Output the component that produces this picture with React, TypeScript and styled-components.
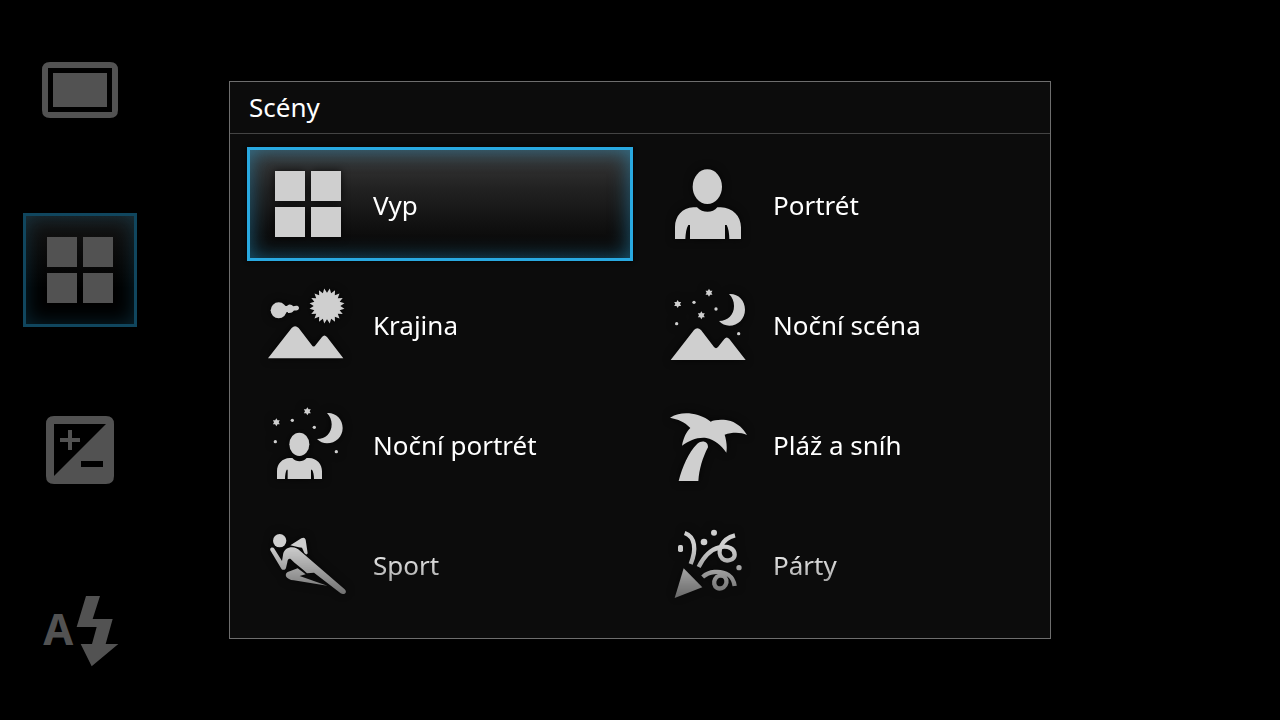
import React, { useState } from "react";
import styled, { createGlobalStyle, css } from "styled-components";

const GlobalStyle = createGlobalStyle`
  *, *::before, *::after { box-sizing: border-box; }
  body {
    margin: 0;
    background: #000;
    color: #fff;
    font-family: "Noto Sans", "Open Sans", sans-serif;
  }
  button { font: inherit; color: inherit; cursor: pointer; }
`;

const Screen = styled.div`
  display: flex;
  min-height: 100vh;
`;

const Toolbar = styled.nav`
  display: grid;
  grid-auto-rows: 1fr;
  place-items: center;
  width: 160px;
  flex: none;
`;

const selectedTool = css`
  border-color: #10465e;
  background: linear-gradient(#151515, #000 70%);
  box-shadow: inset 0 0 20px rgba(41, 170, 225, 0.22);
`;

const ToolButton = styled.button<{ $selected?: boolean }>`
  display: grid;
  place-items: center;
  width: 114px;
  height: 114px;
  padding: 0;
  border: 3px solid transparent;
  background: none;
  color: #525252;
  ${(p) => p.$selected && selectedTool}
`;

const Stage = styled.main`
  display: flex;
  flex: 1;
  align-items: center;
  padding: 0 229px 0 69px;
`;

const Dialog = styled.section`
  flex: 1;
  border: 1px solid #6e6e6e;
  background: #0c0c0c;
`;

const Title = styled.h1`
  margin: 0;
  padding: 5px 19px 6px;
  border-bottom: 1px solid #444;
  font-size: 26px;
  font-weight: 400;
  line-height: 40px;
`;

const SceneGrid = styled.div`
  display: grid;
  grid-template-columns: 1fr 1fr;
  gap: 6px 14px;
  padding: 13px 17px 17px;
  mask-image: linear-gradient(#000 calc(100% - 92px), rgba(0, 0, 0, 0.08));
`;

const selectedScene = css`
  border-color: #29a9e1;
  background: linear-gradient(#3a3a3a, #222 35%, #0e0e0e 75%, #080808);
  box-shadow: inset 0 0 20px rgba(41, 170, 225, 0.5), 0 0 4px #000;
`;

const SceneButton = styled.button<{ $selected: boolean }>`
  display: flex;
  align-items: center;
  gap: 25px;
  height: 114px;
  padding: 0 18px;
  border: 3px solid transparent;
  background: none;
  text-align: left;
  ${(p) => p.$selected && selectedScene}
`;

const SceneLabel = styled.span`
  padding-top: 2px;
  font-size: 26px;
  line-height: 40px;
  white-space: nowrap;
`;

const Icon = styled.svg`
  display: block;
  flex: none;
  width: 80px;
  height: 80px;
  fill: currentColor;
`;

const SceneIcon = styled(Icon)`
  color: #cfcfcf;
  filter: drop-shadow(0 0 4px rgba(0, 0, 0, 0.7));
`;

const AutoLetter = styled.text`
  font-family: "Noto Sans", sans-serif;
  font-size: 130px;
  font-weight: 700;
`;

const sunPoints = Array.from({ length: 40 }, (_, i) => {
  const angle = ((i * 9) * Math.PI) / 180 - Math.PI / 2;
  const r = i % 2 ? 53 : 40;
  return `${(216 + r * Math.cos(angle)).toFixed(1)},${(93 + r * Math.sin(angle)).toFixed(1)}`;
}).join(" ");

function Star({ x, y }: { x: number; y: number }) {
  const points = Array.from({ length: 12 }, (_, i) => {
    const angle = (i * 30 * Math.PI) / 180 - Math.PI / 2;
    const r = i % 2 ? 7 : 12;
    return `${(x + r * Math.cos(angle)).toFixed(1)},${(y + r * Math.sin(angle)).toFixed(1)}`;
  }).join(" ");
  return <polygon points={points} />;
}

const tiles = (
  <path d="M150 288h90v90h-90zM258 288h90v90h-90zM150 396h90v90h-90zM258 396h90v90h-90z" />
);

const person = (
  <>
    <ellipse cx="172" cy="110" rx="44" ry="52" />
    <path d="M75 267V231C75 199 97 173 130 172H141C158 190 188 190 202 172H212C248 173 273 198 273 232V267H238C238 250 235 235 230 225H225V267H120V225H115C109 235 107 250 106 267Z" />
  </>
);

type Item = { name: string; viewBox: string; drawing: React.ReactNode };

const scenes: Item[] = [
  { name: "Vyp", viewBox: "129 267 240 240", drawing: tiles },
  { name: "Portrét", viewBox: "54 42 240 240", drawing: person },
  {
    name: "Krajina",
    viewBox: "39 27 240 240",
    drawing: (
      <>
        <polygon points={sunPoints} />
        <circle cx="71" cy="106" r="24" />
        <path d="M88 90C94 96 95 92 101 89Q109 87 115 94C122 91 132 91 132 99C132 107 122 106 116 107C111 115 100 115 97 111C92 111 91 116 87 120Z" />
        <path d="M39 250L110 159Q120 148 131 159L170 210Q176 219 182 210L201 186Q208 177 216 186L265 250Z" />
      </>
    ),
  },
  {
    name: "Noční scéna",
    viewBox: "39 27 240 240",
    drawing: (
      <>
        <Star x={162} y={53} />
        <Star x={68} y={87} />
        <Star x={139} y={121} />
        <circle cx="117" cy="82" r="5" />
        <circle cx="183" cy="102" r="5" />
        <circle cx="65" cy="146" r="5" />
        <circle cx="251" cy="176" r="5" />
        <path d="M222 57C249 55 270 76 270 104C270 131 249 152 223 152C211 152 200 147 192 138C219 137 237 120 237 93C237 79 232 67 222 57Z" />
        <path d="M47 255L117 165Q127 154 138 165L177 216Q183 223 189 216L208 192Q215 183 223 192L272 255Z" />
      </>
    ),
  },
  {
    name: "Noční portrét",
    viewBox: "39 27 240 240",
    drawing: (
      <>
        <Star x={157} y={49} />
        <Star x={64} y={82} />
        <circle cx="112" cy="76" r="5" />
        <circle cx="178" cy="97" r="5" />
        <circle cx="61" cy="140" r="5" />
        <circle cx="244" cy="170" r="5" />
        <path d="M216 54C242 52 263 72 263 99C263 125 242 145 216 145C205 145 194 140 186 132C212 132 230 115 230 88C230 75 225 63 216 54Z" />
        <ellipse cx="133" cy="148" rx="30" ry="35" />
        <path d="M66 252V229C66 206 82 190 104 189H112C124 202 143 202 155 189H162C186 190 201 207 201 229V252H177C177 240 175 230 171 224H168V252H98V224H95C92 230 90 240 90 252Z" />
      </>
    ),
  },
  {
    name: "Pláž a sníh",
    viewBox: "39 27 240 240",
    drawing: (
      <>
        <path d="M45 68C67 55 88 53 111 56C136 60 156 69 167 80C180 73 207 72 227 78C249 86 265 101 276 120C257 111 232 111 209 119C214 135 217 154 214 173C199 151 179 134 154 129C126 126 103 137 81 152C85 129 94 110 106 99C89 80 69 73 45 68Z" />
        <path d="M71 258C82 216 100 172 127 146C142 134 160 140 159 157C143 187 132 224 130 258Z" />
      </>
    ),
  },
  {
    name: "Sport",
    viewBox: "39 27 240 240",
    drawing: (
      <>
        <circle cx="74" cy="77" r="20" />
        <path d="M46 106C43 98 54 95 58 101L81 138L84 120C86 104 98 97 111 97C121 97 128 101 135 107L269 223C279 232 267 241 257 235L177 173L156 175C138 158 120 146 107 132C100 130 98 135 97 142L93 159C91 166 82 166 79 161Z" />
        <path d="M106 91L139 70Q149 65 152 74L158 115Q155 122 148 114L141 98L131 97Z" />
        <path d="M128 160L152 178L134 183L217 212L116 196C94 194 86 179 98 171Z" />
      </>
    ),
  },
  {
    name: "Párty",
    viewBox: "39 27 240 240",
    drawing: (
      <>
        <path d="M86 160L142 217L59 249Z" />
        <circle cx="177" cy="53" r="9" />
        <circle cx="147" cy="81" r="10" />
        <circle cx="252" cy="158" r="8" />
        <rect x="69" y="90" width="15" height="21" rx="5" />
        <g fill="none" stroke="currentColor" strokeWidth="13">
          <path d="M89 54C121 65 125 104 107 147" />
          <path d="M131 156C144 129 165 104 193 97C222 90 239 103 239 119C239 135 214 142 202 131C184 115 196 72 240 61" />
          <path d="M143 186C153 177 165 172 178 171C213 168 235 184 239 213" />
          <ellipse cx="196" cy="201" rx="18" ry="20" transform="rotate(30 196 201)" />
        </g>
      </>
    ),
  },
];

const tools: Item[] = [
  {
    name: "Režim snímání",
    viewBox: "120 30 240 240",
    drawing: (
      <>
        <path
          fillRule="evenodd"
          d="M150 66H330Q354 66 354 90V210Q354 234 330 234H150Q126 234 126 210V90Q126 66 150 66ZM144 84V216H336V84Z"
        />
        <path d="M159 99H321V201H159Z" />
      </>
    ),
  },
  { name: "Scény", viewBox: "129 267 240 240", drawing: tiles },
  {
    name: "Kompenzace expozice",
    viewBox: "120 60 240 240",
    drawing: (
      <>
        <path
          fillRule="evenodd"
          d="M162 78H318Q342 78 342 102V258Q342 282 318 282H162Q138 282 138 258V102Q138 78 162 78ZM162 102V258L318 102ZM243 213V231H309V213Z"
        />
        <path d="M204 120H216V144H240V156H216V180H204V156H180V144H204Z" />
      </>
    ),
  },
  {
    name: "Automatický blesk",
    viewBox: "120 600 240 240",
    drawing: (
      <>
        <AutoLetter x="130" y="765">A</AutoLetter>
        <path d="M258 618H300L278 687H338L317 762H355L275 829L242 762H276L290 711H230Z" />
      </>
    ),
  },
];

export default function App() {
  const [selected, setSelected] = useState("Vyp");

  return (
    <Screen>
      <GlobalStyle />
      <Toolbar aria-label="Nastavení fotoaparátu">
        {tools.map((tool) => (
          <ToolButton
            key={tool.name}
            type="button"
            aria-label={tool.name}
            $selected={tool.name === "Scény"}
          >
            <Icon viewBox={tool.viewBox} aria-hidden="true">
              {tool.drawing}
            </Icon>
          </ToolButton>
        ))}
      </Toolbar>
      <Stage>
        <Dialog aria-labelledby="scenes-title">
          <Title id="scenes-title">Scény</Title>
          <SceneGrid>
            {scenes.map((scene) => (
              <SceneButton
                key={scene.name}
                type="button"
                aria-pressed={scene.name === selected}
                $selected={scene.name === selected}
                onClick={() => setSelected(scene.name)}
              >
                <SceneIcon viewBox={scene.viewBox} aria-hidden="true">
                  {scene.drawing}
                </SceneIcon>
                <SceneLabel>{scene.name}</SceneLabel>
              </SceneButton>
            ))}
          </SceneGrid>
        </Dialog>
      </Stage>
    </Screen>
  );
}
